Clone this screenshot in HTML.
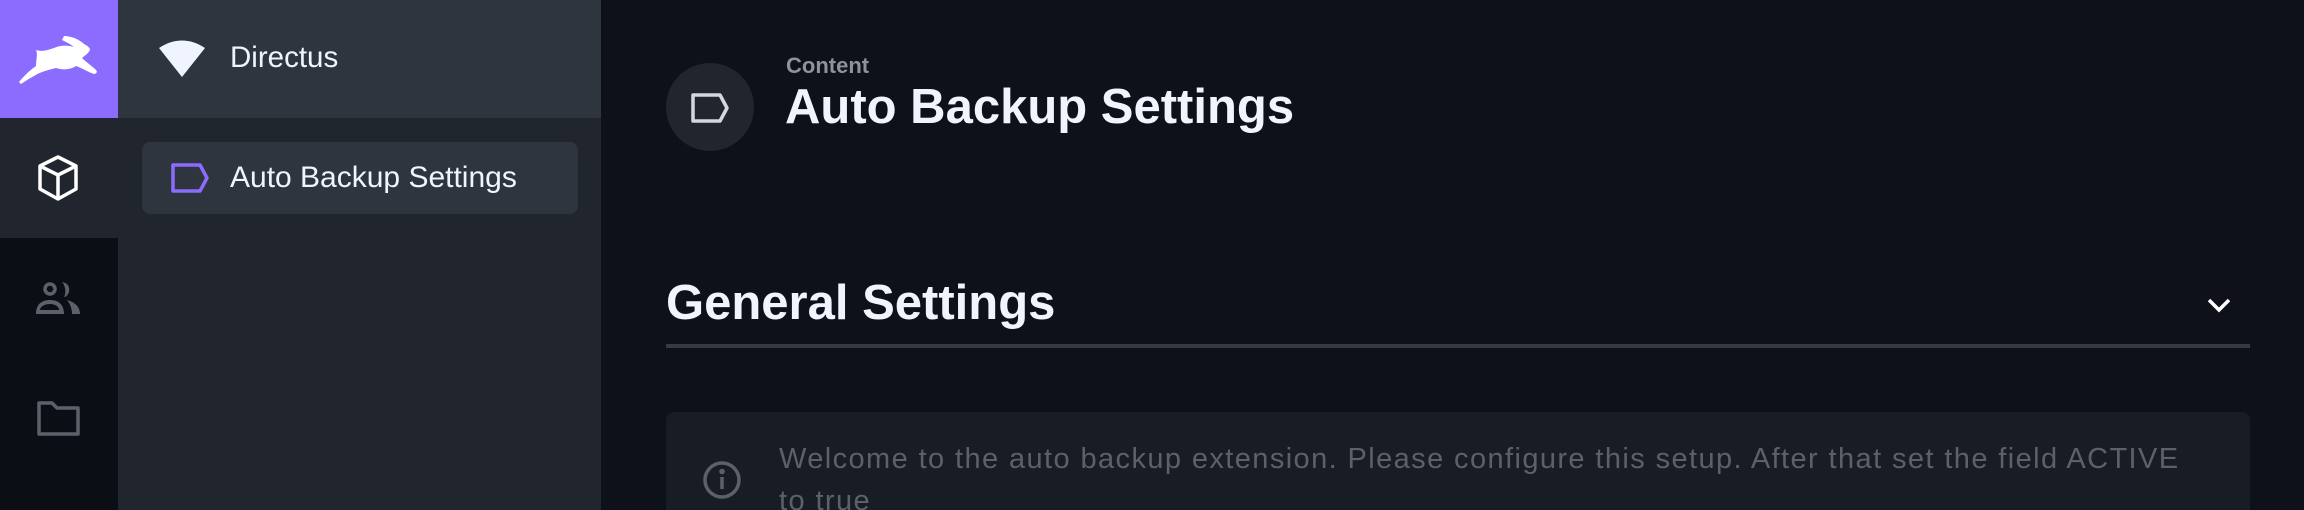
<!DOCTYPE html>
<html style="overflow:hidden"><head><meta charset="utf-8"><style>
*{margin:0;padding:0;box-sizing:border-box}
html,body{width:2304px;height:510px;overflow:hidden}
body{background:#0e1119;font-family:"Liberation Sans",sans-serif;position:relative}
.abs{position:absolute}
</style></head><body>
<!-- rail -->
<div class="abs" style="left:0;top:0;width:118px;height:510px;background:#0c0e15"></div>
<div class="abs" style="left:0;top:0;width:118px;height:118px;background:#8b6cff"></div>
<div class="abs" style="left:0;top:118px;width:118px;height:120px;background:#21252e"></div>
<svg class="abs" style="left:16px;top:32px" width="84" height="52" viewBox="0 0 84 52">
<path d="M3 50 C8 44 14 38 20 34 C20 28 22 22 20 18 C26 20 32 18 38 16 C44 13 52 13 58 15 C54 12 50 10 46 8 L48 4 C56 4 64 8 68 12 C72 14 74 16 74 18 C72 22 68 24 66 26 C70 30 76 34 80 38 C82 40 80 42 78 42 C72 40 66 36 60 34 C54 38 46 38 40 36 C32 38 24 40 18 44 C14 46 8 50 5 52 Z" fill="#fff"/>
</svg>
<svg class="abs" style="left:34px;top:154px" width="48" height="48" viewBox="0 0 48 48" fill="none" stroke="#fff" stroke-width="3.5" stroke-linejoin="round">
<path d="M24 3 L42 12 L42 35 L24 45 L6 35 L6 12 Z M6 12 L24 21 L42 12 M24 21 L24 45"/>
</svg>
<svg class="abs" style="left:34px;top:280px" width="48" height="36" viewBox="0 0 48 36" fill="#5c606b">
<circle cx="16" cy="9" r="5" fill="none" stroke="#5c606b" stroke-width="3.5"/>
<path d="M2 34 C2 24 8 20 16 20 C24 20 30 24 30 34 L26 34 C26 27 22 24 16 24 C10 24 6 27 6 30 L26 30 L26 34 Z"/>
<path d="M28 2 C34 3 36 7 35 12 C34 15 32 17 30 17 C32 14 32 6 28 2 Z M33 20 C40 22 46 26 46 34 L38 34 C38 28 36 24 33 20 Z"/>
</svg>
<svg class="abs" style="left:36px;top:400px" width="46" height="38" viewBox="0 0 46 38" fill="none" stroke="#5c606b" stroke-width="3.5" stroke-linejoin="round">
<path d="M3 3 L16 3 L21 8 L42 8 L42 34 L3 34 Z"/>
</svg>
<!-- sidebar -->
<div class="abs" style="left:118px;top:0;width:483px;height:510px;background:#21252e"></div>
<div class="abs" style="left:118px;top:0;width:483px;height:118px;background:#2f353e"></div>
<svg class="abs" style="left:158px;top:40px" width="48" height="37" viewBox="0 0 48 37"><path d="M1 8 C16 -2 32 -2 47 8 L24 37 Z" fill="#f0f4ff"/></svg>
<div class="abs" style="left:230px;top:40px;font-size:29.5px;color:#f0f4ff;line-height:36px">Directus</div>
<div class="abs" style="left:142px;top:142px;width:436px;height:72px;background:#2f353e;border-radius:8px"></div>
<svg class="abs" style="left:170px;top:162px" width="42" height="32" viewBox="0 0 42 32" fill="none" stroke="#8b6cff" stroke-width="3.5" stroke-linejoin="round"><path d="M3 3 L30 3 L37 16 L30 29 L3 29 Z"/></svg>
<div class="abs" style="left:230px;top:160px;font-size:30px;color:#f0f4ff;line-height:36px">Auto Backup Settings</div>
<!-- header -->
<div class="abs" style="left:666px;top:63px;width:88px;height:88px;border-radius:50%;background:#21252e"></div>
<svg class="abs" style="left:690px;top:92px" width="42" height="32" viewBox="0 0 42 32" fill="none" stroke="#d3d8e0" stroke-width="3.5" stroke-linejoin="round"><path d="M3 3 L30 3 L37 16 L30 29 L3 29 Z"/></svg>
<div class="abs" style="left:786px;top:52px;font-size:22px;color:#8e929c;font-weight:bold;line-height:28px">Content</div>
<div class="abs" style="left:785px;top:79px;font-size:49px;color:#f0f4ff;font-weight:bold;line-height:56px">Auto Backup Settings</div>
<div class="abs" style="left:666px;top:275px;font-size:49px;color:#f0f4ff;font-weight:bold;line-height:56px">General Settings</div>
<svg class="abs" style="left:2205px;top:295px" width="28" height="20" viewBox="0 0 28 20" fill="none" stroke="#fff" stroke-width="3.5"><path d="M4 5 L14 15 L24 5"/></svg>
<div class="abs" style="left:666px;top:344px;width:1584px;height:4px;background:#343a44"></div>
<div class="abs" style="left:666px;top:412px;width:1584px;height:98px;background:#181c24;border-radius:8px 8px 0 0"></div>
<svg class="abs" style="left:702px;top:460px" width="40" height="40" viewBox="0 0 40 40" fill="none" stroke="#5c606b" stroke-width="3.5"><circle cx="20" cy="20" r="17"/><path d="M20 17 L20 29"/><circle cx="20" cy="11.5" r="1" fill="#5c606b"/></svg>
<div class="abs" style="left:779px;top:438px;font-size:29px;color:#5c606b;line-height:42px;white-space:nowrap;letter-spacing:1.4px">Welcome to the auto backup extension. Please configure this setup. After that set the field ACTIVE<br>to true</div>
</body></html>
